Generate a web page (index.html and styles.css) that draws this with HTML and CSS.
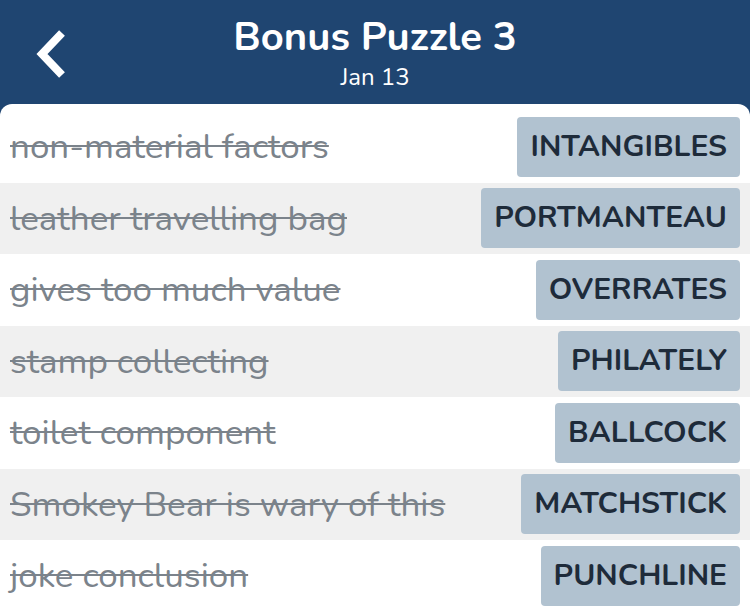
FILE: index.html
```html
<!DOCTYPE html>
<html lang="en">
<head>
  <meta charset="UTF-8">
  <title>Bonus Puzzle 3</title>
  <link rel="stylesheet" href="styles.css">
</head>
<body>
  <div class="header">
    <a class="back" href="#">
      <svg width="36" height="52" viewBox="0 0 36 52">
        <polyline points="28,5 8,26 28,47" fill="none" stroke="#fff" stroke-width="8" stroke-linecap="butt" stroke-linejoin="miter"/>
      </svg>
    </a>
    <div class="title">Bonus Puzzle 3</div>
    <div class="date">Jan 13</div>
  </div>
  <div class="card">
    <div class="row">
      <span class="clue">non-material factors</span>
      <span class="answer">INTANGIBLES</span>
    </div>
    <div class="row">
      <span class="clue">leather travelling bag</span>
      <span class="answer">PORTMANTEAU</span>
    </div>
    <div class="row">
      <span class="clue">gives too much value</span>
      <span class="answer">OVERRATES</span>
    </div>
    <div class="row">
      <span class="clue">stamp collecting</span>
      <span class="answer">PHILATELY</span>
    </div>
    <div class="row">
      <span class="clue">toilet component</span>
      <span class="answer">BALLCOCK</span>
    </div>
    <div class="row">
      <span class="clue">Smokey Bear is wary of this</span>
      <span class="answer">MATCHSTICK</span>
    </div>
    <div class="row">
      <span class="clue">joke conclusion</span>
      <span class="answer">PUNCHLINE</span>
    </div>
  </div>
</body>
</html>
```

FILE: styles.css
```css
html, body {
  height: 100%;
}

body {
  margin: 0;
  background: #1f4571;
  font-family: 'Nunito', 'Open Sans', sans-serif;
  overflow: hidden;
  display: flex;
  flex-direction: column;
}

.header {
  position: relative;
  height: 104px;
  flex-shrink: 0;
  color: #fff;
  text-align: center;
}

.back {
  position: absolute;
  left: 34px;
  top: 28px;
}

.title {
  padding-top: 12px;
  font-size: 40px;
  font-weight: 700;
  line-height: 50px;
}

.date {
  font-size: 24px;
  line-height: 30px;
  margin-top: 0;
}

.card {
  flex: 1;
  background: #fff;
  border-radius: 12px 12px 0 0;
  padding-top: 7px;
  overflow: hidden;
}

.row {
  display: flex;
  align-items: center;
  justify-content: space-between;
  height: 71.5px;
  box-sizing: border-box;
  padding: 0 10px 0 10px;
}

.row:nth-child(even) {
  background: #f0f0f0;
}

.clue {
  font-size: 35px;
  color: #7b838b;
  text-decoration: line-through;
  text-decoration-thickness: 2px;
}

.answer {
  background: #b1c2d0;
  color: #1e2b3a;
  font-size: 30px;
  font-weight: 700;
  line-height: 60px;
  padding: 0 13px;
  border-radius: 4px;
}
```
